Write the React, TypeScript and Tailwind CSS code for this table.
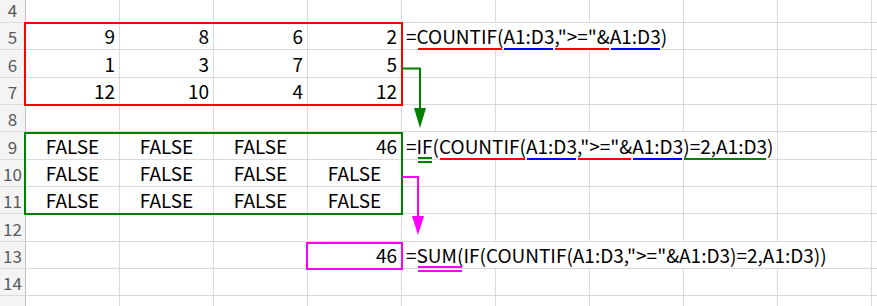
import React from "react";

type Align = "left" | "right" | "center";
type CellSpec = { t?: React.ReactNode; a?: Align; span?: 1 | 3 | 4 | 5 };

const spanW: Record<number, string> = {
  1: "w-[94px]",
  3: "w-[282px]",
  4: "w-[376px]",
  5: "w-[470px]",
};

const alignCls: Record<Align, string> = {
  left: "justify-start",
  right: "justify-end",
  center: "justify-center",
};

function U({
  c,
  children,
  double,
}: {
  c: "red" | "blue" | "green" | "magenta";
  children: React.ReactNode;
  double?: boolean;
}) {
  const bg =
    c === "red"
      ? "bg-[#ff0000]"
      : c === "blue"
      ? "bg-[#0000ff]"
      : c === "green"
      ? "bg-[#008000]"
      : "bg-[#ff00ff]";
  return (
    <span className="relative inline-block leading-[24px]">
      {children}
      {double ? (
        <>
          <span className={`absolute left-[1px] right-[1px] top-[23px] h-[2px] ${bg}`} />
          <span className={`absolute left-[1px] right-[1px] top-[27px] h-[2px] ${bg}`} />
        </>
      ) : (
        <span className={`absolute left-[1px] right-[1px] top-[24px] h-[2px] ${bg}`} />
      )}
    </span>
  );
}

const n = (v: number): CellSpec => ({ t: String(v), a: "right" });
const F: CellSpec = { t: "FALSE", a: "center" };
const E: CellSpec = {};

const f1 = (
  <>
    =<U c="red">COUNTIF(</U>
    <U c="blue">A1:D3</U>
    <U c="red">,"&gt;="&amp;</U>
    <U c="blue">A1:D3</U>)
  </>
);

const f2 = (
  <>
    =<U c="green" double>
      IF
    </U>
    (<U c="red">COUNTIF(</U>
    <U c="blue">A1:D3</U>
    <U c="red">,"&gt;="&amp;</U>
    <U c="blue">A1:D3</U>
    <U c="green">)=2,A1:D3</U>)
  </>
);

const f3 = (
  <>
    =<U c="magenta" double>
      SUM(
    </U>
    IF(COUNTIF(A1:D3,"&gt;="&amp;A1:D3)=2,A1:D3))
  </>
);

const empties = (k: number): CellSpec[] => Array.from({ length: k }, () => ({}));

const rows: { num: number; first?: boolean; cells: CellSpec[] }[] = [
  { num: 4, first: true, cells: empties(10) },
  { num: 5, cells: [n(9), n(8), n(6), n(2), { t: f1, a: "left", span: 3 }, E, E, E] },
  { num: 6, cells: [n(1), n(3), n(7), n(5), ...empties(6)] },
  { num: 7, cells: [n(12), n(10), n(4), n(12), ...empties(6)] },
  { num: 8, cells: empties(10) },
  { num: 9, cells: [F, F, F, n(46), { t: f2, a: "left", span: 4 }, E, E] },
  { num: 10, cells: [F, F, F, F, ...empties(6)] },
  { num: 11, cells: [F, F, F, F, ...empties(6)] },
  { num: 12, cells: empties(10) },
  { num: 13, cells: [E, E, E, n(46), { t: f3, a: "left", span: 5 }, E] },
  { num: 14, cells: empties(10) },
  { num: 15, cells: empties(10) },
];

export default function App() {
  return (
    <div className="relative w-[877px] h-[306px] overflow-hidden bg-white font-['Noto_Sans_CJK_SC',sans-serif]">
      <div className="flex flex-col">
        {rows.map((r) => (
          <div
            key={r.num}
            className={`flex shrink-0 border-b border-[#dadada] ${r.first ? "h-[23px]" : "h-[27.33px]"}`}
          >
            <div className="w-[26px] shrink-0 border-r border-[#c4c4c4] bg-[#f4f4f4] flex items-end justify-center text-[17px] leading-[24px] text-[#5a5a5a]">
              {r.num}
            </div>
            {r.cells.map((c, i) => (
              <div
                key={i}
                className={`${spanW[c.span ?? 1]} shrink-0 border-r border-[#dadada] flex items-end ${alignCls[c.a ?? "left"]} px-[4px] pb-[1px] text-[19px] leading-[24px] text-black whitespace-nowrap`}
              >
                {c.t}
              </div>
            ))}
          </div>
        ))}
      </div>

      {/* range highlight boxes */}
      <div className="absolute left-[24px] top-[22px] w-[379px] h-[84px] border-2 border-[#ff0000]" />
      <div className="absolute left-[24px] top-[132px] w-[379px] h-[83px] border-2 border-[#008000]" />
      <div className="absolute left-[306px] top-[242px] w-[97px] h-[28px] border-2 border-[#ff00ff]" />

      {/* arrows */}
      <svg className="absolute left-0 top-0" width="877" height="306" viewBox="0 0 877 306">
        <polyline points="402,68.5 420,68.5 420,110" fill="none" stroke="#008000" strokeWidth="2" />
        <polygon points="414,108 426,108 420,128" fill="#008000" />
        <polyline points="402,177 418,177 418,218" fill="none" stroke="#ff00ff" strokeWidth="2" />
        <polygon points="412,216 424,216 418,235" fill="#ff00ff" />
      </svg>
    </div>
  );
}
